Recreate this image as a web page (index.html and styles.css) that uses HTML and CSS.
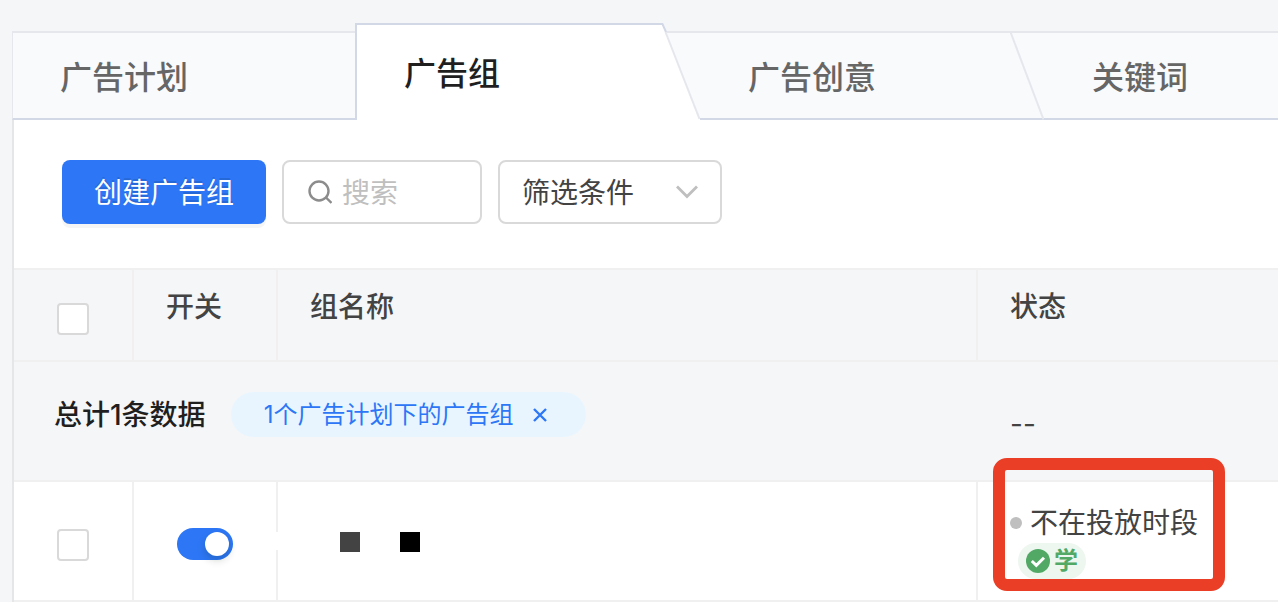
FILE: index.html
```html
<!DOCTYPE html>
<html lang="zh-CN">
<head>
<meta charset="utf-8">
<title>广告组</title>
<link rel="stylesheet" href="styles.css">
</head>
<body>
<main class="page">
  <nav class="tabs" role="tablist">
    <button class="tab tab-first" role="tab" type="button">广告计划</button>
    <button class="tab tab-active" role="tab" type="button" aria-selected="true">广告组
      <svg class="slant" width="38" height="97" viewBox="0 0 38 97" aria-hidden="true">
        <path d="M0 0H38V8H3z" fill="#f5f6f8"/>
        <path d="M3 8H38V97z" fill="#f9fafc"/>
        <path d="M3 9H38" stroke="#e5e7ed" stroke-width="2"/>
        <path d="M0 0L4 9" stroke="#d3d8e6" stroke-width="2"/>
        <path d="M3.500 9L37.500 96" stroke="#e5e7ed" stroke-width="2"/>
      </svg>
    </button>
    <button class="tab" role="tab" type="button">广告创意
      <svg class="slant" width="34" height="89" viewBox="0 0 34 89" aria-hidden="true">
        <path d="M0.500 1L33.500 88.500" stroke="#e5e7ed" stroke-width="2"/>
      </svg>
    </button>
    <button class="tab tab-last" role="tab" type="button">关键词</button>
  </nav>

  <section class="panel">
    <div class="toolbar">
      <button class="create" type="button">创建广告组</button>
      <label class="field search">
        <svg width="24" height="24" viewBox="0 0 24 24" fill="none" stroke="#8c8c8c" stroke-width="2.400" aria-hidden="true">
          <circle cx="11" cy="11" r="9.500"/><path d="M18 17.500L23.500 23"/>
        </svg>
        <input class="search-input" type="text" placeholder="搜索" aria-label="搜索">
      </label>
      <label class="field filter">
        <select class="filter-select" aria-label="筛选条件"><option>筛选条件</option></select>
        <svg width="22" height="14" viewBox="0 0 22 14" fill="none" stroke="#bfbfbf" stroke-width="2.800" aria-hidden="true">
          <path d="M1 1.500L11 11.500L21 1.500"/>
        </svg>
      </label>
    </div>

    <table class="grid">
      <colgroup><col class="col-check"><col class="col-switch"><col class="col-name"><col></colgroup>
      <thead>
        <tr class="head-row">
          <th class="check-cell"><input class="check" type="checkbox" aria-label="全选"></th>
          <th>开关</th>
          <th>组名称</th>
          <th>状态</th>
        </tr>
      </thead>
      <tbody>
        <tr class="total-row">
          <td colspan="3">
            <div class="total">
              <span>总计1条数据</span>
              <span class="chip">1个广告计划下的广告组
                <button class="chip-close" type="button" aria-label="清除">
                  <svg width="14" height="14" viewBox="0 0 14 14" stroke="#2d77f6" stroke-width="2.400" aria-hidden="true"><path d="M1 1L13 13M13 1L1 13"/></svg>
                </button>
              </span>
            </div>
          </td>
          <td class="total-status">--</td>
        </tr>
        <tr class="data-row">
          <td class="check-cell"><input class="check" type="checkbox" aria-label="选择广告组"></td>
          <td class="switch-cell"><input class="switch" type="checkbox" role="switch" aria-label="开关" checked></td>
          <td class="name-cell"><div class="masks"><span class="mask"></span><span class="mask mask-dark"></span></div></td>
          <td class="status-cell">
            <div class="status"><span class="dot"></span>不在投放时段</div>
            <div class="badge">
              <svg width="24" height="24" viewBox="0 0 24 24" fill="none" aria-hidden="true">
                <circle cx="12" cy="12" r="12" fill="#52a966"/><path d="M5.800 12L10.300 16.300L18 8.800" stroke="#fff" stroke-width="3"/>
              </svg>学
            </div>
            <div class="callout"></div>
          </td>
        </tr>
      </tbody>
    </table>
  </section>
</main>
</body>
</html>
```
FILE: styles.css
```css
* { box-sizing: border-box; }

body {
  margin: 0;
  background: #f5f6f8;
  color: #434343;
  font-family: Inter, "Noto Sans CJK SC", sans-serif;
  font-size: 28px;
  line-height: 40px;
}

button, input, select { font: inherit; margin: 0; }
svg { display: block; flex: none; }

.page { padding: 23px 0 0 12px; }

.tabs { display: flex; align-items: flex-end; }

.tab {
  position: relative;
  flex: none;
  width: 344px;
  height: 89px;
  padding: 4px 48px 0;
  border: 0 solid #e5e7ed;
  border-top-width: 2px;
  border-bottom: 2px solid #d3d8e6;
  background: #f9fafc;
  color: #666;
  font-size: 32px;
  font-weight: 500;
  text-align: left;
}
.tab-first { border-left-width: 1px; padding-left: 47px; }
.tab-last { flex: 1 0 180px; width: auto; }
.tab-active {
  width: 345px;
  height: 97px;
  margin-left: -1px;
  padding: 2px 47px 0;
  border: solid #d3d8e6;
  border-width: 2px 0 0 2px;
  background: #fff;
  color: #1f1f1f;
}
.slant { position: absolute; top: -2px; right: 0; }

.panel { border-left: 2px solid #e5e6e8; background: #fff; }

.toolbar { display: flex; gap: 16px; padding: 40px 48px 44px; }

.create {
  height: 64px;
  padding: 2px 32px 0;
  border: 0;
  border-radius: 8px;
  background: #2d77f6;
  color: #fff;
  box-shadow: 0 4px 0 rgba(0, 0, 0, 0.04);
  text-shadow: 0 -2px 0 rgba(0, 0, 0, 0.12);
}

.field {
  display: flex;
  align-items: center;
  height: 64px;
  padding: 0 24px;
  border: 2px solid #d9d9d9;
  border-radius: 8px;
  background: #fff;
}
.search { width: 200px; gap: 10px; }
.search-input {
  min-width: 0;
  width: 100%;
  padding: 2px 0 0;
  border: 0;
  outline: 0;
  background: none;
}
.search-input::placeholder { color: #bfbfbf; }
.filter { width: 224px; padding: 0 22px; }
.filter-select {
  flex: 1;
  min-width: 0;
  padding: 2px 0 0;
  border: 0;
  outline: 0;
  appearance: none;
  background: none;
  color: #434343;
}

.grid {
  width: 100%;
  table-layout: fixed;
  border-collapse: separate;
  border-spacing: 0;
}
.col-check { width: 120px; }
.col-switch { width: 144px; }
.col-name { width: 700px; }

th, td {
  padding: 0 32px;
  border: 0 solid #f0f0f0;
  border-bottom-width: 2px;
  text-align: left;
  vertical-align: top;
}
.head-row th, .data-row td { border-right-width: 2px; }
.head-row th:last-child, .data-row td:last-child { border-right-width: 0; }

.head-row th {
  height: 94px;
  padding-top: 17px;
  border-top-width: 2px;
  background: #f5f6f8;
  font-weight: 500;
}

.check {
  display: block;
  width: 32px;
  height: 32px;
  margin: 0 auto;
  border: 2px solid #d9d9d9;
  border-radius: 4px;
  appearance: none;
  background: #fff;
}
.head-row .check-cell { padding-top: 33px; }

.total-row td { height: 120px; background: #f5f6f8; }
.total-row td:first-child { padding: 30px 40px; }
.total {
  display: flex;
  align-items: center;
  gap: 25px;
  color: #1f1f1f;
  font-weight: 500;
}
.chip {
  display: flex;
  align-items: center;
  gap: 20px;
  height: 45px;
  padding: 0 39px 0 33px;
  border-radius: 23px;
  background: #e8f5ff;
  color: #2d77f6;
  font-size: 24px;
  font-weight: 400;
}
.chip-close { padding: 0; border: 0; background: none; }
.total-row .total-status { padding-top: 42px; }

.data-row td { height: 120px; }
.data-row .check-cell { padding-top: 47px; }
.data-row .switch-cell { position: relative; padding-top: 46px; }
.switch-cell::after {
  content: "";
  position: absolute;
  top: 50px;
  right: -2px;
  width: 2px;
  height: 18px;
  background: #fff;
}

.switch {
  display: flex;
  align-items: center;
  justify-content: flex-end;
  width: 56px;
  height: 32px;
  margin: 0 auto;
  padding: 4px;
  border-radius: 16px;
  appearance: none;
  background: #2d77f6;
}
.switch::before {
  content: "";
  width: 24px;
  height: 24px;
  border-radius: 50%;
  background: #fff;
  box-shadow: 0 4px 8px rgba(0, 35, 11, 0.2);
}

.data-row .name-cell { padding: 50px 62px 0; }
.masks { display: flex; gap: 40px; }
.mask { width: 20px; height: 20px; background: #434343; }
.mask-dark { background: #000; }

.data-row .status-cell { position: relative; padding-top: 21px; }
.status {
  display: flex;
  align-items: center;
  gap: 8px;
  white-space: nowrap;
}
.dot { width: 12px; height: 12px; border-radius: 50%; background: #bfbfbf; }
.badge {
  display: flex;
  align-items: center;
  gap: 4px;
  width: 68px;
  height: 36px;
  margin-left: 8px;
  padding: 0 8px;
  border-radius: 18px;
  background: #edf6ef;
  color: #52a966;
  font-size: 24px;
  font-weight: 700;
}
.callout {
  position: absolute;
  top: -24px;
  left: 15px;
  width: 232px;
  height: 133px;
  border: 12px solid #eb3e26;
  border-radius: 14px;
}
```
